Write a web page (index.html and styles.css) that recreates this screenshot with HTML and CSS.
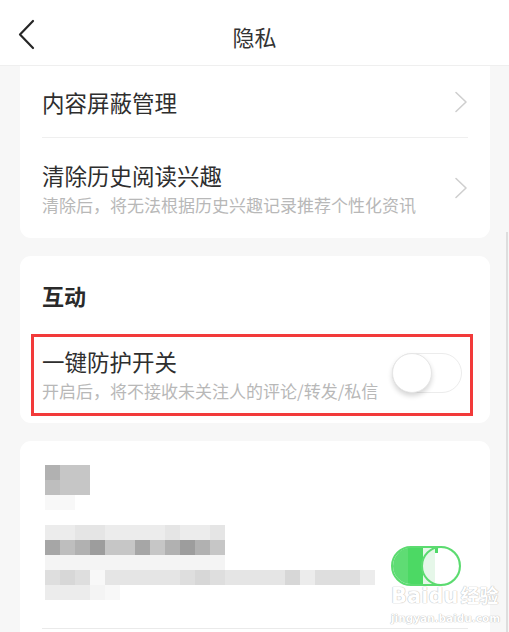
FILE: index.html
```html
<!DOCTYPE html>
<html lang="zh-CN">
<head>
<meta charset="utf-8">
<title>隐私</title>
<link rel="stylesheet" href="styles.css">
</head>
<body>
<div class="page">
  <header class="topbar">
    <svg class="back" width="20" height="32" viewBox="0 0 20 32"><path d="M16 3 L3 16.5 L16 30" fill="none" stroke="#262626" stroke-width="2.2" stroke-linecap="round" stroke-linejoin="round"/></svg>
    <div class="title">隐私</div>
  </header>

  <main class="content">
    <section class="card card-first">
      <div class="row row-single">
        <div class="row-text"><div class="row-title">内容屏蔽管理</div></div>
        <svg class="chev" width="14" height="22" viewBox="0 0 14 22"><path d="M2 1.5 L12 11 L2 20.5" fill="none" stroke="#cfcfcf" stroke-width="1.6" stroke-linecap="round" stroke-linejoin="round"/></svg>
      </div>
      <div class="row row-double">
        <div class="row-text">
          <div class="row-title">清除历史阅读兴趣</div>
          <div class="row-sub">清除后，将无法根据历史兴趣记录推荐个性化资讯</div>
        </div>
        <svg class="chev" width="14" height="22" viewBox="0 0 14 22"><path d="M2 1.5 L12 11 L2 20.5" fill="none" stroke="#cfcfcf" stroke-width="1.6" stroke-linecap="round" stroke-linejoin="round"/></svg>
      </div>
    </section>

    <section class="card card-second">
      <div class="section-title">互动</div>
      <div class="row row-toggle">
        <div class="row-text">
          <div class="row-title">一键防护开关</div>
          <div class="row-sub">开启后，将不接收未关注人的评论/转发/私信</div>
        </div>
        <div class="switch"><div class="knob"></div></div>
      </div>
      <div class="highlight"></div>
    </section>

    <section class="card card-third">
      <div class="mrow"><span class="px g2"></span><span class="px g4"></span><span class="px g4"></span></div>
      <div class="mrow"><span class="px g3"></span><span class="px g4"></span><span class="px g4"></span></div>
      <div class="mrow"><span class="px g10"></span><span class="px g10"></span></div>
      <div class="mrow"></div>
      <div class="m-body">
        <div class="m-left">
          <div class="mrow">
            <span class="px g8"></span><span class="px g8"></span><span class="px g7"></span><span class="px g7"></span><span class="px g8"></span><span class="px g8"></span><span class="px g8"></span><span class="px g8"></span><span class="px g7"></span><span class="px g8"></span><span class="px g8"></span><span class="px g7"></span>
          </div>
          <div class="mrow">
            <span class="px d1"></span><span class="px g3"></span><span class="px g2"></span><span class="px d0"></span><span class="px g4"></span><span class="px g4"></span><span class="px d1"></span><span class="px g4"></span><span class="px g2"></span><span class="px d0"></span><span class="px g2"></span><span class="px g4"></span>
          </div>
          <div class="mrow">
            <span class="px g9"></span><span class="px g9"></span><span class="px g9"></span><span class="px g9"></span><span class="px g9"></span><span class="px g9"></span><span class="px g9"></span><span class="px g9"></span><span class="px g9"></span><span class="px g9"></span><span class="px g9"></span><span class="px g9"></span>
          </div>
          <div class="mrow">
            <span class="px g6"></span><span class="px g5"></span><span class="px g6"></span><span class="px g10"></span><span class="px g7"></span><span class="px g7"></span><span class="px g7"></span><span class="px g7"></span><span class="px g7"></span><span class="px g6"></span><span class="px g5"></span><span class="px g6"></span><span class="px g7"></span><span class="px g7"></span><span class="px g7"></span><span class="px g7"></span><span class="px g5"></span><span class="px g8"></span><span class="px g6"></span><span class="px g6"></span><span class="px g6"></span><span class="px g8"></span>
          </div>
          <div class="mrow">
            <span class="px g8"></span><span class="px g8"></span><span class="px g8"></span><span class="px g9"></span><span class="px g10"></span>
          </div>
        </div>
        <div class="switch switch-on">
          <span class="on-a"></span><span class="on-b"></span><span class="on-c"></span>
          <div class="knob knob-on"></div>
        </div>
      </div>
      <div class="sep3"></div>
      <div class="watermark">
        <div class="wm-logo">Bai<span class="paw">du</span><span class="wm-cn">经验</span></div>
        <div class="wm-url">jingyan.baidu.com</div>
      </div>
    </section>
  </main>
  <div class="scrollbar"></div>
</div>
</body>
</html>
```

FILE: styles.css
```css
* { box-sizing: border-box; }
html, body { margin: 0; padding: 0; }
body {
  background: #f7f7f7;
  font-family: "Noto Sans CJK SC", "Noto Sans", sans-serif;
  color: #2e2e2e;
  overflow: hidden;
}
.page {
  position: relative;
  width: 509px;
  height: 632px;
  overflow: hidden;
}
.topbar {
  height: 66px;
  background: #fff;
  border-bottom: 1px solid #efefef;
  position: relative;
  display: flex;
  justify-content: center;
  padding-top: 21px;
}
.back {
  position: absolute;
  left: 17px;
  top: 18px;
}
.title {
  font-size: 22px;
  line-height: 30px;
  color: #333;
}
.content {
  padding: 0 19px 0 20px;
  display: flex;
  flex-direction: column;
  gap: 18px;
}
.card {
  background: #fff;
  border-radius: 11px;
  position: relative;
}
.card-first {
  border-top-left-radius: 0;
  border-top-right-radius: 0;
  height: 172px;
}
.row {
  display: flex;
  align-items: center;
  justify-content: space-between;
  margin: 0 22px;
}
.row-single {
  height: 72px;
  border-bottom: 1px solid #efefef;
}
.row-double {
  height: 100px;
}
.row-title {
  font-size: 22.5px;
  line-height: 30px;
  color: #2e2e2e;
  white-space: nowrap;
}
.row-sub {
  font-size: 17px;
  line-height: 24px;
  color: #b8b8b8;
  margin-top: 3px;
  white-space: nowrap;
}
.chev { margin-right: 0; flex: none; }
.card-second {
  height: 167px;
  padding-top: 24px;
}
.section-title {
  font-size: 22px;
  line-height: 30px;
  font-weight: 700;
  color: #2a2a2a;
  margin-left: 22px;
}
.row-toggle {
  margin-top: 36px;
  margin-right: 28px;
}
.switch {
  width: 70px;
  height: 40px;
  border-radius: 20px;
  border: 1px solid #ececec;
  background: #fff;
  position: relative;
  flex: none;
  margin-top: -4px;
}
.knob {
  position: absolute;
  left: -1px;
  top: -1px;
  width: 40px;
  height: 40px;
  border-radius: 50%;
  background: #fff;
  border: 1px solid #e6e6e6;
  box-shadow: 0 3px 5px rgba(0,0,0,0.16);
}
.highlight {
  position: absolute;
  left: 11px;
  top: 78px;
  width: 442px;
  height: 82px;
  border: 3px solid #f23a3a;
}
.card-third {
  height: 230px;
  padding-top: 24px;
  padding-left: 25px;
}
.mrow {
  display: flex;
  height: 15px;
}
.px {
  width: 15px;
  height: 15px;
  flex: none;
}
.d0 { background: #9d9d9d; }
.d1 { background: #a6a6a6; }
.g1 { background: #a3a3a3; }
.g2 { background: #b1b1b1; }
.g3 { background: #bebebe; }
.g4 { background: #c6c6c6; }
.g5 { background: #d7d7d7; }
.g6 { background: #dedede; }
.g7 { background: #e5e5e5; }
.g8 { background: #ececec; }
.g9 { background: #f4f4f4; }
.g10 { background: #f8f8f8; }
.m-body {
  display: flex;
  justify-content: space-between;
  align-items: flex-start;
  padding-right: 29px;
}
.switch-on {
  margin-top: 21px;
  border: 2px solid #5cdb70;
  background: #fff;
  overflow: hidden;
}
.on-a, .on-b, .on-c {
  position: absolute;
  top: 0;
  bottom: 0;
  width: 15px;
}
.on-a { left: 0; background: #5fdc74; }
.on-b { left: 15px; background: #4cd964; }
.on-c { left: 30px; background: #e6f7e9; width: 12px; }
.on-a { border-radius: 0; }
.switch-on::before {
  content: "";
  position: absolute;
  left: 0; top: 0;
  width: 45px; height: 5px;
  background: #4fd968;
  z-index: 0;
}
.knob-on {
  left: auto;
  right: -2px;
  top: -2px;
  border: 2px solid #5cdb70;
  box-shadow: none;
  background: transparent;
}
.sep3 {
  height: 1px;
  background: #eaeaea;
  margin: 28px 22px 0 -3px;
}
.watermark {
  position: absolute;
  left: 371px;
  top: 142px;
  color: #fff;
  font-family: "DejaVu Sans", sans-serif;
  text-shadow: 0 0 1px #b8b8b8, 0 0 1px #b8b8b8;
}
.wm-logo {
  font-size: 21px;
  font-weight: 700;
  line-height: 24px;
  letter-spacing: 0;
}
.paw { font-weight: 700; }
.wm-cn {
  font-family: "Noto Sans CJK SC", sans-serif;
  font-size: 19px;
  margin-left: 2px;
}
.wm-url {
  font-size: 10.5px;
  line-height: 14px;
  margin-top: 3px;
  font-weight: 700;
}
.scrollbar {
  position: absolute;
  right: 1px;
  top: 232px;
  width: 2px;
  height: 400px;
  background: #dedede;
}
```
